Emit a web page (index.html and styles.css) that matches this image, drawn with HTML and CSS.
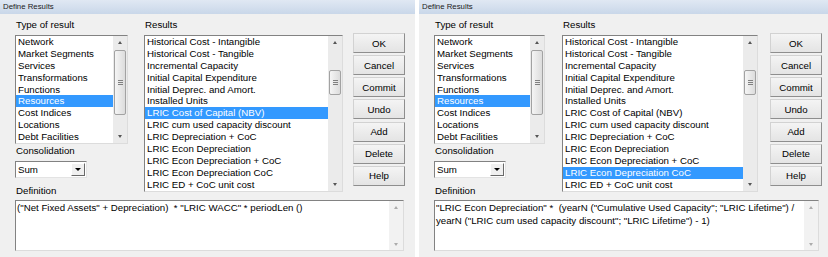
FILE: index.html
```html
<!DOCTYPE html>
<html lang="en">
<head>
    <meta charset="UTF-8">
    <title>Define Results</title>
    <link rel="stylesheet" href="styles.css">
</head>
<body>
    <div class="screen">
        <div class="window">
            <div class="titlebar">Define Results</div>
            <div class="body">
                <div class="top">
                    <div class="col-type">
                        <div class="label">Type of result</div>
                        <div class="listbox">
                            <ul class="items">
                                <li>Network</li>
                                <li>Market Segments</li>
                                <li>Services</li>
                                <li>Transformations</li>
                                <li>Functions</li>
                                <li class="sel">Resources</li>
                                <li>Cost Indices</li>
                                <li>Locations</li>
                                <li>Debt Facilities</li>
                            </ul>
                            <div class="vscroll">
                                <div class="arrow up"></div>
                                <div class="track"><div class="thumb thumb-type"><span class="grip"></span></div></div>
                                <div class="arrow down"></div>
                            </div>
                        </div>
                        <div class="label label-cons">Consolidation</div>
                        <div class="combo">
                            <span class="combo-value">Sum</span>
                            <span class="combo-btn"></span>
                        </div>
                        <div class="label label-def">Definition</div>
                    </div>
                    <div class="col-results">
                        <div class="label">Results</div>
                        <div class="listbox">
                            <ul class="items">
                                <li>Historical Cost - Intangible</li>
                                <li>Historical Cost - Tangible</li>
                                <li>Incremental Capacity</li>
                                <li>Initial Capital Expenditure</li>
                                <li>Initial Deprec. and Amort.</li>
                                <li>Installed Units</li>
                                <li class="sel">LRIC Cost of Capital (NBV)</li>
                                <li>LRIC cum used capacity discount</li>
                                <li>LRIC Depreciation + CoC</li>
                                <li>LRIC Econ Depreciation</li>
                                <li>LRIC Econ Depreciation + CoC</li>
                                <li>LRIC Econ Depreciation CoC</li>
                                <li>LRIC ED + CoC unit cost</li>
                            </ul>
                            <div class="vscroll">
                                <div class="arrow up"></div>
                                <div class="track"><div class="thumb thumb-results"><span class="grip"></span></div></div>
                                <div class="arrow down"></div>
                            </div>
                        </div>
                    </div>
                    <div class="buttons">
                        <button class="btn">OK</button>
                        <button class="btn">Cancel</button>
                        <button class="btn">Commit</button>
                        <button class="btn">Undo</button>
                        <button class="btn">Add</button>
                        <button class="btn">Delete</button>
                        <button class="btn">Help</button>
                    </div>
                </div>
                <div class="definition">
                    <div class="def-text">("Net Fixed Assets" + Depreciation)  * "LRIC WACC" * periodLen ()</div>
                    <div class="vscroll disabled">
                        <div class="arrow up"></div>
                        <div class="track"></div>
                        <div class="arrow down"></div>
                    </div>
                </div>
            </div>
        </div>

        <div class="window alt">
            <div class="titlebar">Define Results</div>
            <div class="body">
                <div class="top">
                    <div class="col-type">
                        <div class="label">Type of result</div>
                        <div class="listbox">
                            <ul class="items">
                                <li>Network</li>
                                <li>Market Segments</li>
                                <li>Services</li>
                                <li>Transformations</li>
                                <li>Functions</li>
                                <li class="sel">Resources</li>
                                <li>Cost Indices</li>
                                <li>Locations</li>
                                <li>Debt Facilities</li>
                            </ul>
                            <div class="vscroll">
                                <div class="arrow up"></div>
                                <div class="track"><div class="thumb thumb-type"><span class="grip"></span></div></div>
                                <div class="arrow down"></div>
                            </div>
                        </div>
                        <div class="label label-cons">Consolidation</div>
                        <div class="combo">
                            <span class="combo-value">Sum</span>
                            <span class="combo-btn"></span>
                        </div>
                        <div class="label label-def">Definition</div>
                    </div>
                    <div class="col-results">
                        <div class="label">Results</div>
                        <div class="listbox">
                            <ul class="items">
                                <li>Historical Cost - Intangible</li>
                                <li>Historical Cost - Tangible</li>
                                <li>Incremental Capacity</li>
                                <li>Initial Capital Expenditure</li>
                                <li>Initial Deprec. and Amort.</li>
                                <li>Installed Units</li>
                                <li>LRIC Cost of Capital (NBV)</li>
                                <li>LRIC cum used capacity discount</li>
                                <li>LRIC Depreciation + CoC</li>
                                <li>LRIC Econ Depreciation</li>
                                <li>LRIC Econ Depreciation + CoC</li>
                                <li class="sel">LRIC Econ Depreciation CoC</li>
                                <li>LRIC ED + CoC unit cost</li>
                            </ul>
                            <div class="vscroll">
                                <div class="arrow up"></div>
                                <div class="track"><div class="thumb thumb-results"><span class="grip"></span></div></div>
                                <div class="arrow down"></div>
                            </div>
                        </div>
                    </div>
                    <div class="buttons">
                        <button class="btn">OK</button>
                        <button class="btn">Cancel</button>
                        <button class="btn">Commit</button>
                        <button class="btn">Undo</button>
                        <button class="btn">Add</button>
                        <button class="btn">Delete</button>
                        <button class="btn">Help</button>
                    </div>
                </div>
                <div class="definition">
                    <div class="def-text">"LRIC Econ Depreciation" *  (yearN ("Cumulative Used Capacity"; "LRIC Lifetime") /
yearN ("LRIC cum used capacity discount"; "LRIC Lifetime") - 1)</div>
                    <div class="vscroll disabled">
                        <div class="arrow up"></div>
                        <div class="track"></div>
                        <div class="arrow down"></div>
                    </div>
                </div>
                <div class="label label-comment">Comment</div>
            </div>
        </div>
    </div>
</body>
</html>
```

FILE: styles.css
```css
* {
    box-sizing: border-box;
}
body {
    margin: 0;
    background: #fff;
    font-family: "Liberation Sans", Arial, sans-serif;
    font-size: 9.7px;
    color: #000;
}
.screen {
    display: flex;
    gap: 4px;
    height: 257px;
    overflow: hidden;
}
.window {
    --type-w: 113px;
    --gap1: 16px;
    --res-w: 199px;
    --gap2: 10px;
    --btn-w: 52px;
    --def-w: 389px;
    width: 415px;
    height: 257px;
    background: #f0f0f0;
    overflow: hidden;
}
.window.alt {
    --type-w: 111px;
    --gap1: 17px;
    --res-w: 196px;
    --gap2: 12px;
    --def-w: 385px;
    width: 409px;
}
.titlebar {
    height: 14px;
    line-height: 14px;
    padding-left: 3px;
    font-size: 7.8px;
    color: #1b1b1b;
    background: linear-gradient(#e0e8f3, #c9d7e9);
}
.body {
    padding: 5px 0 0 15px;
}
.top {
    display: flex;
    align-items: flex-start;
}
.col-type {
    width: var(--type-w);
}
.col-results {
    width: var(--res-w);
    margin-left: var(--gap1);
}
.label {
    height: 12px;
    line-height: 12px;
    padding-left: 1px;
    white-space: nowrap;
}
.label-cons {
    margin-top: 1px;
}
.label-def {
    margin-top: 7px;
}
.label-comment {
    margin-top: 3px;
}

/* list boxes */
.listbox {
    display: flex;
    margin-top: 4px;
    background: #fff;
    border: 1px solid;
    border-color: #828282 #dcdcdc #dcdcdc #828282;
}
.items {
    list-style: none;
    margin: 0;
    padding: 0;
    flex: 1;
    min-width: 0;
}
.items li {
    height: 11.9px;
    line-height: 11.9px;
    padding-left: 2px;
    white-space: nowrap;
    overflow: hidden;
}
.items li.sel {
    background: #3399ff;
    color: #fff;
}

/* scrollbars */
.vscroll {
    width: 14px;
    display: flex;
    flex-direction: column;
    background: #ebebeb;
}
.arrow {
    height: 13px;
    display: flex;
    align-items: center;
    justify-content: center;
}
.arrow::before {
    content: "";
    border-left: 2.5px solid transparent;
    border-right: 2.5px solid transparent;
}
.arrow.up::before {
    border-bottom: 3px solid #555;
}
.arrow.down::before {
    border-top: 3px solid #555;
}
.track {
    flex: 1;
}
.thumb {
    margin: 0 1px;
    border: 1px solid #a2a2a2;
    border-radius: 2px;
    background: linear-gradient(90deg, #f5f5f5, #dcdcdc);
    display: flex;
    align-items: center;
    justify-content: center;
}
.thumb-type {
    margin-top: 1px;
    height: 65px;
}
.thumb-results {
    margin-top: 21px;
    height: 25px;
}
.grip {
    width: 5px;
    height: 5px;
    background: repeating-linear-gradient(#808080 0 1px, transparent 1px 2px);
}
.vscroll.disabled {
    background: #f2f2f2;
}
.vscroll.disabled .arrow {
    height: 12px;
}
.vscroll.disabled .arrow.up::before {
    border-bottom-color: #acacac;
}
.vscroll.disabled .arrow.down::before {
    border-top-color: #acacac;
}

/* combo box */
.combo {
    display: flex;
    width: 72px;
    height: 17px;
    margin-top: 4px;
    background: #fff;
    border: 1px solid;
    border-color: #828282 #e3e3e3 #e3e3e3 #828282;
}
.combo-value {
    flex: 1;
    padding-left: 2px;
    line-height: 15px;
}
.combo-btn {
    width: 14px;
    margin: 1px;
    background: #f0f0f0;
    border: 1px solid;
    border-color: #fff #696969 #696969 #fff;
    display: flex;
    align-items: center;
    justify-content: center;
}
.combo-btn::before {
    content: "";
    border-left: 3px solid transparent;
    border-right: 3px solid transparent;
    border-top: 3px solid #000;
}

/* buttons */
.buttons {
    width: var(--btn-w);
    margin-left: var(--gap2);
    margin-top: 14px;
    height: 153px;
    display: flex;
    flex-direction: column;
    justify-content: space-between;
}
.btn {
    height: 20px;
    padding: 0;
    font: inherit;
    color: #000;
    background: linear-gradient(#f4f4f4, #e4e4e4);
    border: 1px solid;
    border-color: #d2d2d2 #8e8e8e #8e8e8e #d2d2d2;
}

/* definition box */
.definition {
    display: flex;
    width: var(--def-w);
    height: 51px;
    margin-top: 3px;
    background: #fff;
    border: 1px solid;
    border-color: #828282 #dcdcdc #dcdcdc #828282;
}
.def-text {
    flex: 1;
    padding: 1px 1px;
    line-height: 12.5px;
    white-space: pre-wrap;
}
```
